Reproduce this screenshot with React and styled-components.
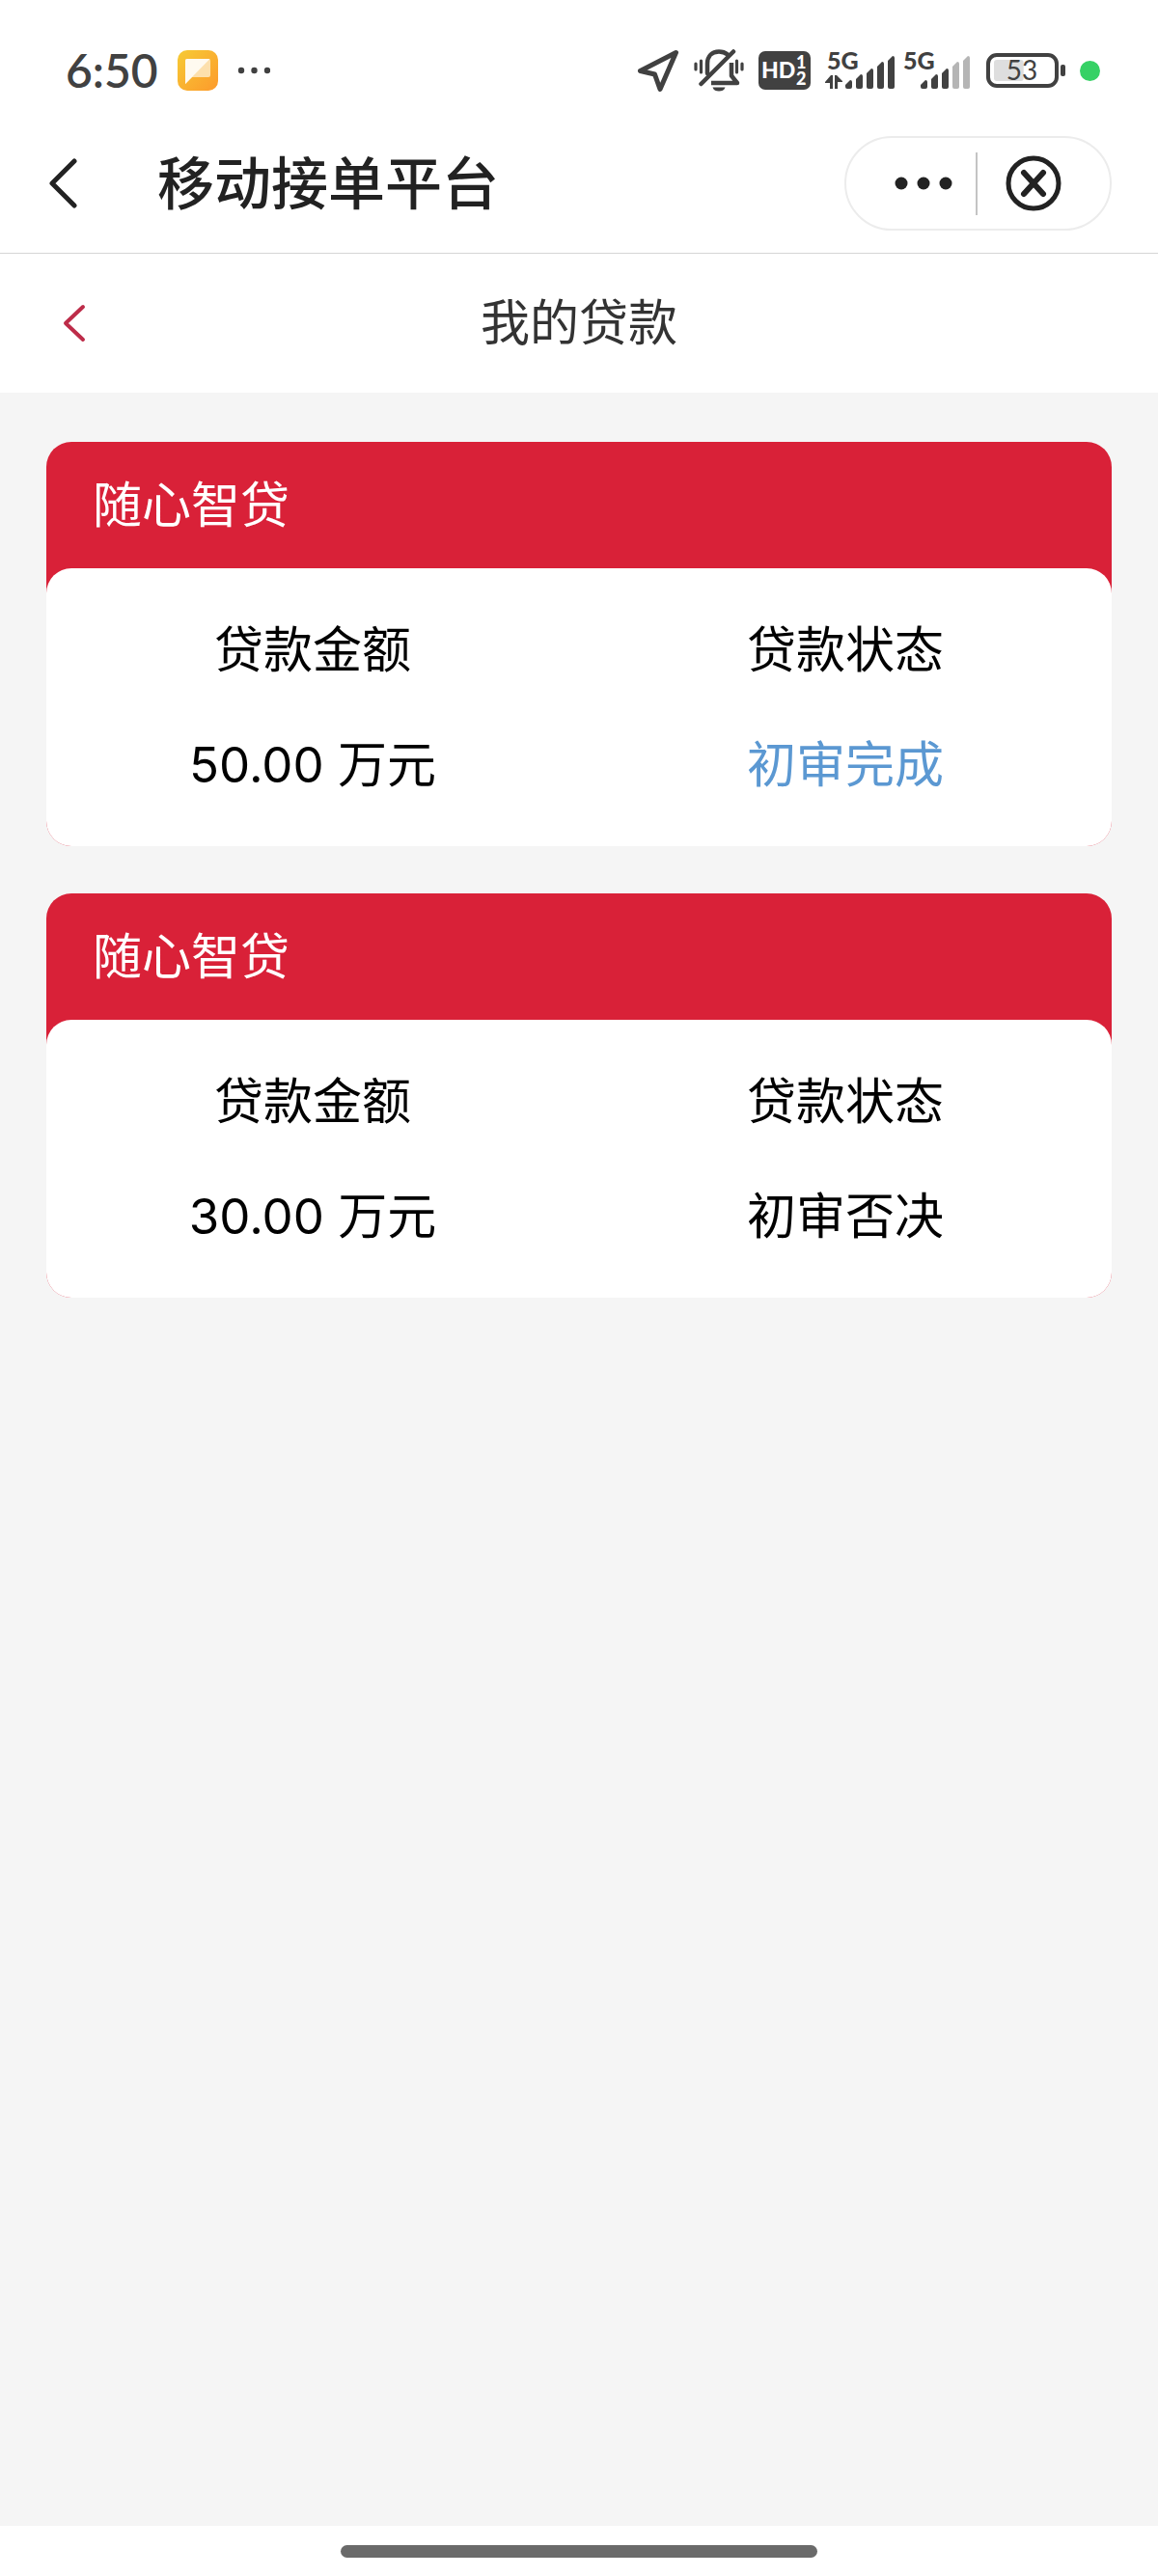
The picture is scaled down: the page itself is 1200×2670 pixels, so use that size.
import styled, { createGlobalStyle } from "styled-components";

const GlobalStyle = createGlobalStyle`
  * {
    box-sizing: border-box;
  }
  body {
    margin: 0;
    font-family: Inter, "Noto Sans CJK SC", sans-serif;
    color: #000;
    background: #fff;
  }
  button {
    padding: 0;
    border: 0;
    background: none;
    font: inherit;
    color: inherit;
    cursor: pointer;
  }
  svg {
    display: block;
  }
`
const Page = styled.div`
  min-height: 100vh;
  display: flex;
  flex-direction: column;
  background: #fff;
`

const StatusBar = styled.div`
  height: 118px;
  padding: 28px 60px 0 68px;
  display: flex;
  align-items: center;
  justify-content: space-between;
  color: #414141;
  font-family: Lato, sans-serif;
`
const StatusLeft = styled.div`
  display: flex;
  align-items: center;
  gap: 20px;
`
const Time = styled.span`
  font-size: 48px;
  line-height: 56px;
  font-weight: 600;
`
const StatusRight = styled.div`
  display: flex;
  align-items: center;
  gap: 15px;
`
const Signals = styled.div`
  display: flex;
  gap: 7px;
`
const ActiveDot = styled.span`
  width: 21px;
  height: 21px;
  border-radius: 50%;
  background: #36d165;
`

const AppBar = styled.header`
  height: 145px;
  padding: 0 48px 0 38px;
  display: flex;
  align-items: center;
  border-bottom: 1px solid #d6d6d6;
  color: #222;
`
const IconButton = styled.button`
  width: ${(props) => props.$width}px;
  height: 96px;
  display: flex;
  align-items: center;
  justify-content: center;
`
const AppTitle = styled.div`
  flex: 1;
  margin-left: 71px;
  padding-top: 2px;
  font-size: 59px;
  line-height: 80px;
  font-weight: 500;
`
const Capsule = styled.div`
  width: 277px;
  height: 98px;
  padding: 0 26px 0 31px;
  display: flex;
  align-items: center;
  justify-content: space-between;
  border: 2px solid #ececec;
  border-radius: 49px;
`
const Divider = styled.span`
  width: 2px;
  height: 65px;
  background: #c4c4c4;
`

const NavBar = styled.nav`
  height: 144px;
  padding: 0 52px;
  display: grid;
  grid-template-columns: 50px 1fr 50px;
  align-items: center;
  color: #333;
`
const NavTitle = styled.h1`
  margin: 0;
  font-size: 51px;
  line-height: 72px;
  font-weight: 400;
  text-align: center;
`

const Main = styled.main`
  flex: 1;
  padding: 51px 48px;
  display: flex;
  flex-direction: column;
  gap: 49px;
  background: #f5f5f5;
`
const Card = styled.section`
  border-radius: 26px;
  background: #d92138;
`
const CardTitle = styled.h2`
  margin: 0;
  padding: 30px 48px 29px;
  font-size: 51px;
  line-height: 72px;
  font-weight: 400;
  color: #fff;
`
const CardBody = styled.dl`
  margin: 0;
  padding: 49px 0 48px;
  display: grid;
  grid-template-columns: 1fr 1fr;
  border-radius: 26px;
  background: #fff;
  text-align: center;
  font-size: 51px;
  line-height: 72px;
`
const Field = styled.div`
  display: flex;
  flex-direction: column;
  gap: 47px;
`
const Label = styled.dt``
const Value = styled.dd`
  margin: 0;
  color: ${(props) => (props.$done ? "#5b98d2" : "#000")};
`

const HomeArea = styled.footer`
  height: 52px;
  padding-top: 20px;
  display: flex;
  justify-content: center;
`
const HomePill = styled.span`
  width: 494px;
  height: 13px;
  border-radius: 7px;
  background: #6a6a6a;
`


const NoteIcon = () => (
  <svg width="42" height="42" viewBox="0 0 42 42">
    <defs>
      <linearGradient id="note" x1="0" y1="0" x2="1" y2="1">
        <stop offset="0" stopColor="#f6cb35" />
        <stop offset="1" stopColor="#fd9a2c" />
      </linearGradient>
    </defs>
    <rect width="42" height="42" rx="10" fill="url(#note)" />
    <path d="M10 9H32Q34 9 34 11V26Q34 28 32 28H15L8 35V11Q8 9 10 9Z" fill="#fde0ad" />
    <path d="M10 9H33.500L8 35V11Q8 9 10 9Z" fill="#fffaf0" />
  </svg>
)

const MoreDots = () => (
  <svg width="34" height="42" viewBox="0 0 34 42" fill="currentColor">
    <circle cx="4" cy="21" r="3.200" />
    <circle cx="17.500" cy="21" r="3.200" />
    <circle cx="31" cy="21" r="3.200" />
  </svg>
)

const LocationIcon = () => (
  <svg width="44" height="44" viewBox="0 0 44 44" fill="none" stroke="currentColor" strokeWidth="5" strokeLinejoin="round">
    <path d="M40.500 3.500L3.500 22.500L18.500 26L24 41.500Z" />
  </svg>
)

const MutedBellIcon = () => (
  <svg width="52" height="44" viewBox="0 0 52 44" fill="none" stroke="currentColor" strokeWidth="4.500" strokeLinecap="round">
    <path d="M2 15V21M7.500 12V24M44.500 12V24M50 15V21" strokeWidth="3.200" />
    <path d="M14 25V15C14 7 19 2.500 26 2.500C29.500 2.500 32.500 3.500 35 5.500" />
    <path d="M41 2.500L7.500 36" />
    <path d="M18 35H45L39 27.500V14" strokeLinejoin="round" strokeLinecap="butt" />
    <path d="M19.500 39.500H32.500C31.500 42.500 29 43.500 26 43.500S20.500 42.500 19.500 39.500Z" fill="currentColor" stroke="none" />
  </svg>
)

const HdIcon = () => (
  <svg width="54" height="40" viewBox="0 0 54 40" fontFamily="Lato, sans-serif" fontWeight="900">
    <rect width="54" height="40" rx="7" fill="currentColor" />
    <text x="3" y="28" fontSize="23" fill="#fff">HD</text>
    <text x="39" y="18" fontSize="18" fill="#fff">1</text>
    <text x="39" y="35" fontSize="18" fill="#fff">2</text>
  </svg>
)

const BAR_HEIGHTS = [9, 15, 21, 28, 34]

const SignalIcon = ({ level, transfer }) => {
  const start = transfer ? 21 : 18
  const width = transfer ? 74 : 71
  const textX = transfer ? 2 : 0
  return (
    <svg width={width} height="64" viewBox={`0 -12 ${width} 64`}>
      <text x={textX} y="19" fontSize="25" fontWeight="900" fontFamily="Lato, sans-serif" fill="currentColor">5G</text>
      {transfer && (
        <path d="M0 32L6 25H8V39H5V33H0ZM10 25H12L18 31V32H13V39H10Z" fill="currentColor" />
      )}
      {BAR_HEIGHTS.map((h, i) => {
        const x = start + i * 11
        const top = 39 - h
        return (
          <path
            key={h}
            d={`M${x} ${top + 5}L${x + 5} ${top}Q${x + 7} ${top} ${x + 7} ${top + 2}V37Q${x + 7} 39 ${x + 5} 39H${x + 2}Q${x} 39 ${x} 37Z`}
            fill={i < level ? "currentColor" : "#b5b5b5"}
          />
        )
      })}
    </svg>
  )
}

const BatteryIcon = ({ percent }) => (
  <svg width="82" height="36" viewBox="0 0 82 36">
    <rect x="8" y="7" width={percent * 0.58} height="22" rx="3" fill="#dedede" />
    <rect x="2" y="2" width="71" height="32" rx="9" fill="none" stroke="currentColor" strokeWidth="4" />
    <rect x="77" y="12" width="5" height="12" rx="2" fill="currentColor" />
    <text x="37" y="28" fontSize="28" textAnchor="middle" fontFamily="Lato, sans-serif" fill="currentColor">{percent}</text>
  </svg>
)

const BackIcon = () => (
  <svg width="30" height="54" viewBox="0 0 30 54" fill="none" stroke="currentColor" strokeWidth="5" strokeLinecap="round" strokeLinejoin="round">
    <path d="M27 4L4 27L27 50" />
  </svg>
)

const NavBackIcon = () => (
  <svg width="24" height="42" viewBox="0 0 24 42" fill="none" stroke="#bd2c49" strokeWidth="4" strokeLinecap="round" strokeLinejoin="round">
    <path d="M21 4L3 21L21 38" />
  </svg>
)

const MenuIcon = () => (
  <svg width="60" height="58" viewBox="0 0 60 58" fill="currentColor">
    <circle cx="7" cy="29" r="6.500" />
    <circle cx="30" cy="29" r="6.500" />
    <circle cx="53" cy="29" r="6.500" />
  </svg>
)

const CloseIcon = () => (
  <svg width="58" height="58" viewBox="0 0 58 58" fill="none" stroke="currentColor" strokeLinecap="round">
    <circle cx="29" cy="29" r="26" strokeWidth="5" />
    <path d="M19 18L39 40M39 18L19 40" strokeWidth="6" />
  </svg>
)


const loans = [
  { id: 1, name: "随心智贷", amount: "50.00 万元", status: "初审完成", done: true },
  { id: 2, name: "随心智贷", amount: "30.00 万元", status: "初审否决", done: false },
]

const LoanCard = ({ loan }) => {
  return (
    <Card>
      <CardTitle>{loan.name}</CardTitle>
      <CardBody>
        <Field>
          <Label>贷款金额</Label>
          <Value>{loan.amount}</Value>
        </Field>
        <Field>
          <Label>贷款状态</Label>
          <Value $done={loan.done}>{loan.status}</Value>
        </Field>
      </CardBody>
    </Card>
  )
}

const App = () => {
  return (
    <Page>
      <GlobalStyle />
      <StatusBar>
        <StatusLeft>
          <Time>6:50</Time>
          <NoteIcon />
          <MoreDots />
        </StatusLeft>
        <StatusRight>
          <LocationIcon />
          <MutedBellIcon />
          <HdIcon />
          <Signals>
            <SignalIcon level={5} transfer />
            <SignalIcon level={3} />
          </Signals>
          <BatteryIcon percent={53} />
          <ActiveDot />
        </StatusRight>
      </StatusBar>
      <AppBar>
        <IconButton $width={54} aria-label="返回">
          <BackIcon />
        </IconButton>
        <AppTitle>移动接单平台</AppTitle>
        <Capsule>
          <IconButton $width={98} aria-label="更多">
            <MenuIcon />
          </IconButton>
          <Divider />
          <IconButton $width={106} aria-label="关闭">
            <CloseIcon />
          </IconButton>
        </Capsule>
      </AppBar>
      <NavBar>
        <IconButton $width={50} aria-label="返回上一页">
          <NavBackIcon />
        </IconButton>
        <NavTitle>我的贷款</NavTitle>
      </NavBar>
      <Main>
        {loans.map((loan) => (
          <LoanCard key={loan.id} loan={loan} />
        ))}
      </Main>
      <HomeArea>
        <HomePill />
      </HomeArea>
    </Page>
  )
}

export default App
